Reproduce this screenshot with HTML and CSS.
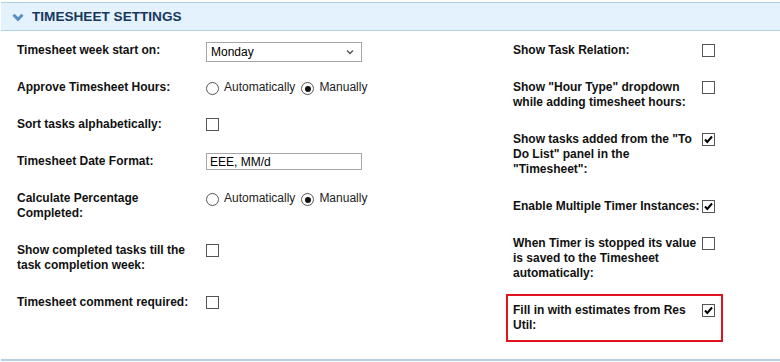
FILE: index.html
```html
<!DOCTYPE html>
<html lang="en">
<head>
    <meta charset="UTF-8" />
    <meta name="viewport" content="width=device-width, initial-scale=1.0" />
    <title>Timesheet Settings</title>
    <link rel="stylesheet" href="styles.css">
</head>
<body>
    <div class="panel">
        <div class="panel-header">
            <svg class="chevron" width="12" height="9" viewBox="0 0 12 9">
                <polyline points="1.5,1.8 6,6.3 10.5,1.8" fill="none" stroke="#5b8fc2" stroke-width="3" />
            </svg>
            <span class="panel-title">Timesheet Settings</span>
        </div>

        <div class="settings">
            <!-- Left column -->
            <div class="col col-left">
                <div class="label">Timesheet week start on:</div>
                <div class="control">
                    <div class="select-wrap">
                        <select class="select">
                            <option>Monday</option>
                            <option>Sunday</option>
                        </select>
                        <svg class="select-arrow" width="8" height="6" viewBox="0 0 8 6">
                            <polyline points="1,1.5 4,4.5 7,1.5" fill="none" stroke="#555" stroke-width="1.4" />
                        </svg>
                    </div>
                </div>

                <div class="label">Approve Timesheet Hours:</div>
                <div class="control radios">
                    <span class="radio"></span><span class="radio-text">Automatically</span>
                    <span class="radio selected"></span><span class="radio-text">Manually</span>
                </div>

                <div class="label">Sort tasks alphabetically:</div>
                <div class="control"><span class="check"></span></div>

                <div class="label">Timesheet Date Format:</div>
                <div class="control"><input class="text-input" type="text" value="EEE, MM/d"></div>

                <div class="label">Calculate Percentage Completed:</div>
                <div class="control radios">
                    <span class="radio"></span><span class="radio-text">Automatically</span>
                    <span class="radio selected"></span><span class="radio-text">Manually</span>
                </div>

                <div class="label">Show completed tasks till the task completion week:</div>
                <div class="control"><span class="check"></span></div>

                <div class="label">Timesheet comment required:</div>
                <div class="control"><span class="check"></span></div>
            </div>

            <!-- Right column -->
            <div class="col col-right">
                <div class="label">Show Task Relation:</div>
                <div class="control"><span class="check"></span></div>

                <div class="label">Show "Hour Type" dropdown while adding timesheet hours:</div>
                <div class="control"><span class="check"></span></div>

                <div class="label">Show tasks added from the "To Do List" panel in the "Timesheet":</div>
                <div class="control">
                    <span class="check"><svg width="11" height="11" viewBox="0 0 11 11"><polyline points="2,5.5 4.3,8 9,2.5" fill="none" stroke="#000" stroke-width="2" /></svg></span>
                </div>

                <div class="label">Enable Multiple Timer Instances:</div>
                <div class="control">
                    <span class="check"><svg width="11" height="11" viewBox="0 0 11 11"><polyline points="2,5.5 4.3,8 9,2.5" fill="none" stroke="#000" stroke-width="2" /></svg></span>
                </div>

                <div class="label">When Timer is stopped its value is saved to the Timesheet automatically:</div>
                <div class="control"><span class="check"></span></div>

                <div class="highlight">
                    <div class="label">Fill in with estimates from Res Util:</div>
                    <div class="control">
                        <span class="check"><svg width="11" height="11" viewBox="0 0 11 11"><polyline points="2,5.5 4.3,8 9,2.5" fill="none" stroke="#000" stroke-width="2" /></svg></span>
                    </div>
                </div>
            </div>
        </div>
    </div>
</body>
</html>
```

FILE: styles.css
```css
body {
    margin: 0;
    font-family: "Liberation Sans", Arial, sans-serif;
    background-color: #ffffff;
    color: #111;
}
.panel {
    margin: 2px 0 0 1px;
    border-bottom: 2px solid #b3cfe2;
}
.panel-header {
    display: flex;
    align-items: center;
    height: 27px;
    background-color: #e3f2fd;
    border-top: 1px solid #b3cfe2;
    border-bottom: 1px solid #b3cfe2;
    padding-left: 11px;
}
.chevron {
    margin-right: 8px;
    margin-top: 1px;
}
.panel-title {
    font-weight: bold;
    font-size: 13.6px;
    text-transform: uppercase;
    color: #18375c;
}
.settings {
    display: flex;
    padding: 12px 0 26px 16px;
}
.col {
    display: grid;
    grid-template-columns: 189px auto;
    row-gap: 22px;
    align-content: start;
    align-items: start;
}
.col-left {
    width: 496px;
}
.label {
    font-size: 12px;
    font-weight: bold;
    line-height: 15px;
}
.control {
    display: flex;
    align-items: flex-start;
    line-height: 15px;
}
.select-wrap {
    position: relative;
    margin: -1px 0 -4px;
}
.select {
    appearance: none;
    -webkit-appearance: none;
    width: 156px;
    height: 20px;
    border: 1px solid #a6a6a6;
    border-radius: 0;
    background-color: #fff;
    font-family: "Liberation Sans", Arial, sans-serif;
    font-size: 12px;
    color: #000;
    padding: 0 4px;
    margin: 0;
}
.select-arrow {
    position: absolute;
    right: 8px;
    top: 7px;
}
.text-input {
    width: 156px;
    height: 17px;
    box-sizing: border-box;
    border: 1px solid #a6a6a6;
    margin: -1px 0 -1px;
    padding: 0 3px;
    font-family: "Liberation Sans", Arial, sans-serif;
    font-size: 12px;
    color: #000;
}
.radios {
    font-size: 12px;
    color: #222;
}
.radio {
    width: 11px;
    height: 11px;
    border: 1px solid #555;
    border-radius: 50%;
    margin-top: 2px;
    box-sizing: content-box;
    display: flex;
    align-items: center;
    justify-content: center;
}
.radio.selected::after {
    content: "";
    width: 6px;
    height: 6px;
    border-radius: 50%;
    background-color: #111;
}
.radio-text {
    margin: 0 6px 0 5px;
}
.check {
    width: 11px;
    height: 11px;
    border: 1px solid #555;
    background-color: #fff;
    margin-top: 1px;
    display: flex;
    align-items: center;
    justify-content: center;
}
.highlight {
    grid-column: span 2;
    display: grid;
    grid-template-columns: 189px auto;
    border: 2px solid #e0141e;
    margin: -9px -8px -9px -7px;
    padding: 7px 6px 7px 5px;
}
```
